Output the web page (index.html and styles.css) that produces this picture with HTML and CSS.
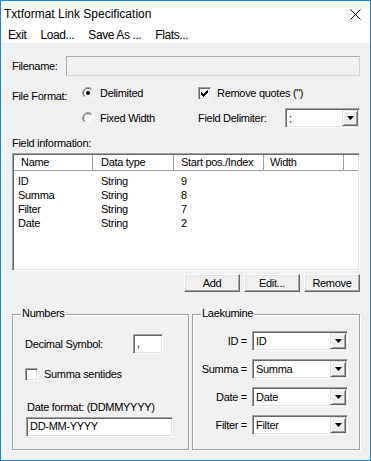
FILE: index.html
```html
<!DOCTYPE html>
<html>
<head>
<meta charset="utf-8">
<title>Txtformat Link Specification</title>
<link rel="stylesheet" href="styles.css">
</head>
<body>
<div class="window">
  <div class="titlebar">
    <span class="title">Txtformat Link Specification</span>
    <svg class="close" width="11" height="11" viewBox="0 0 11 11"><path d="M0.5 0.5 L10.5 10.5 M10.5 0.5 L0.5 10.5" stroke="#000" stroke-width="1" fill="none"/></svg>
  </div>
  <div class="menubar">
    <span>Exit</span><span>Load...</span><span>Save As ...</span><span>Flats...</span>
  </div>
  <div class="content">
    <div class="filename-row">
      <span class="lbl">Filename:</span>
      <div class="field-disabled"></div>
    </div>

    <div class="format">
      <div class="ff-label">File Format:</div>
      <div class="opt r1">
        <svg class="radio" width="12" height="12" viewBox="0 0 12 12">
          <circle cx="6" cy="6" r="5" fill="#fff"/>
          <path d="M2.1 9.9 A5.5 5.5 0 0 1 9.9 2.1" stroke="#a0a0a0" fill="none"/>
          <path d="M9.9 2.1 A5.5 5.5 0 0 1 2.1 9.9" stroke="#fff" fill="none"/>
          <path d="M2.8 9.2 A4.5 4.5 0 0 1 9.2 2.8" stroke="#696969" fill="none"/>
          <path d="M9.2 2.8 A4.5 4.5 0 0 1 2.8 9.2" stroke="#e3e3e3" fill="none"/>
          <circle cx="6" cy="6" r="2" fill="#000"/>
        </svg>
        <span>Delimited</span>
      </div>
      <div class="opt c1">
        <span class="cb">
          <svg width="11" height="11" viewBox="0 0 11 11" fill="#000">
            <rect x="2" y="4" width="1" height="3"/><rect x="3" y="5" width="1" height="3"/><rect x="4" y="6" width="1" height="3"/><rect x="5" y="5" width="1" height="3"/><rect x="6" y="4" width="1" height="3"/><rect x="7" y="3" width="1" height="3"/><rect x="8" y="2" width="1" height="3"/>
          </svg>
        </span>
        <span>Remove quotes (")</span>
      </div>
      <div class="opt r2">
        <svg class="radio" width="12" height="12" viewBox="0 0 12 12">
          <circle cx="6" cy="6" r="5" fill="#fff"/>
          <path d="M2.1 9.9 A5.5 5.5 0 0 1 9.9 2.1" stroke="#a0a0a0" fill="none"/>
          <path d="M9.9 2.1 A5.5 5.5 0 0 1 2.1 9.9" stroke="#fff" fill="none"/>
          <path d="M2.8 9.2 A4.5 4.5 0 0 1 9.2 2.8" stroke="#696969" fill="none"/>
          <path d="M9.2 2.8 A4.5 4.5 0 0 1 2.8 9.2" stroke="#e3e3e3" fill="none"/>
        </svg>
        <span>Fixed Width</span>
      </div>
      <div class="delim">
        <span>Field Delimiter:</span>
        <div class="combo w75"><span class="val">;</span><span class="arrow"><svg width="7" height="4" viewBox="0 0 7 4"><polygon points="0,0 7,0 3.5,4" fill="#000"/></svg></span></div>
      </div>
    </div>

    <div class="section-label">Field information:</div>
    <div class="listview">
      <div class="lv-header">
        <div class="hcell">Name</div>
        <div class="hcell">Data type</div>
        <div class="hcell">Start pos./Index</div>
        <div class="hcell">Width</div>
        <div class="hcell filler"></div>
      </div>
      <div class="lv-body">
        <div class="lv-row"><span>ID</span><span>String</span><span>9</span><span></span></div>
        <div class="lv-row"><span>Summa</span><span>String</span><span>8</span><span></span></div>
        <div class="lv-row"><span>Filter</span><span>String</span><span>7</span><span></span></div>
        <div class="lv-row"><span>Date</span><span>String</span><span>2</span><span></span></div>
      </div>
    </div>

    <div class="buttons">
      <div class="btn">Add</div>
      <div class="btn">Edit...</div>
      <div class="btn">Remove</div>
    </div>

    <div class="groups">
      <div class="group numbers">
        <span class="legend">Numbers</span>
        <div class="dec-row">
          <span class="dec-lbl">Decimal Symbol:</span>
          <div class="edit w30">,</div>
        </div>
        <div class="opt cb-row">
          <span class="cb"></span>
          <span>Summa sentides</span>
        </div>
        <div class="date-lbl">Date format: (DDMMYYYY)</div>
        <div class="edit date-edit">DD-MM-YYYY</div>
      </div>
      <div class="group laek">
        <span class="legend">Laekumine</span>
        <div class="map-grid">
          <span class="map-lbl">ID =</span>
          <div class="combo"><span class="val">ID</span><span class="arrow"><svg width="7" height="4" viewBox="0 0 7 4"><polygon points="0,0 7,0 3.5,4" fill="#000"/></svg></span></div>
          <span class="map-lbl">Summa =</span>
          <div class="combo"><span class="val">Summa</span><span class="arrow"><svg width="7" height="4" viewBox="0 0 7 4"><polygon points="0,0 7,0 3.5,4" fill="#000"/></svg></span></div>
          <span class="map-lbl">Date =</span>
          <div class="combo"><span class="val">Date</span><span class="arrow"><svg width="7" height="4" viewBox="0 0 7 4"><polygon points="0,0 7,0 3.5,4" fill="#000"/></svg></span></div>
          <span class="map-lbl">Filter =</span>
          <div class="combo"><span class="val">Filter</span><span class="arrow"><svg width="7" height="4" viewBox="0 0 7 4"><polygon points="0,0 7,0 3.5,4" fill="#000"/></svg></span></div>
        </div>
      </div>
    </div>
  </div>
</div>
</body>
</html>
```

FILE: styles.css
```css
* { box-sizing: border-box; }
html, body { margin: 0; padding: 0; }
body {
  font-family: "Liberation Sans", Arial, sans-serif;
  font-size: 11px;
  letter-spacing: -0.3px;
  color: #000;
  background: #fff;
}
.window {
  width: 371px;
  height: 461px;
  border: 1px solid #1883d7;
  background: #f0f0f0;
  display: flex;
  flex-direction: column;
  overflow: hidden;
}
.titlebar {
  height: 26px;
  flex: none;
  background: #fff;
  display: flex;
  align-items: center;
  justify-content: space-between;
  padding: 0 9px 0 3px;
  font-size: 12px;
  letter-spacing: 0;
}
.close { display: block; }
.menubar {
  height: 16px;
  flex: none;
  background: #fff;
  display: flex;
  align-items: center;
  gap: 14px;
  padding-left: 7px;
  font-size: 12px;
  letter-spacing: -0.4px;
}
.content { padding: 13px 10px 0 11px; line-height: 13px; }

/* shared 3D styles */
.edit, .combo, .listview, .cb {
  border: 1px solid;
  border-color: #a0a0a0 #fff #fff #a0a0a0;
  box-shadow: inset 1px 1px 0 #696969, inset -1px -1px 0 #e3e3e3;
  background: #fff;
}

.filename-row { display: flex; align-items: center; height: 20px; }
.filename-row .lbl { width: 54px; }
.field-disabled {
  flex: 1;
  height: 20px;
  border: 1px solid #acacac;
  border-right-color: #d4d4d4;
  border-bottom-color: #d4d4d4;
  background: #f0f0f0;
}

.format {
  display: grid;
  grid-template-columns: 70px 116px 1fr;
  grid-template-rows: 20px 22px;
  row-gap: 4px;
  margin-top: 7px;
}
.ff-label { grid-row: 1; grid-column: 1; padding-top: 7px; }
.opt { display: flex; align-items: center; gap: 6px; }
.r1 { grid-row: 1; grid-column: 2; }
.c1 { grid-row: 1; grid-column: 3; }
.r2 { grid-row: 2; grid-column: 2; }
.radio { display: block; flex: none; }
.cb {
  width: 13px;
  height: 13px;
  flex: none;
  display: flex;
  align-items: center;
  justify-content: center;
}
.cb svg { display: block; }
.delim {
  grid-row: 2;
  grid-column: 3;
  display: flex;
  align-items: center;
  justify-content: space-between;
}

.combo {
  height: 20px;
  padding: 1px;
  display: flex;
  align-items: center;
}
.w75 { width: 75px; }
.combo .val { flex: 1; padding-left: 2px; white-space: nowrap; overflow: hidden; }
.arrow {
  width: 16px;
  height: 16px;
  flex: none;
  border: 1px solid;
  border-color: #e3e3e3 #696969 #696969 #e3e3e3;
  box-shadow: inset 1px 1px 0 #fff, inset -1px -1px 0 #a0a0a0;
  background: #f0f0f0;
  display: flex;
  align-items: center;
  justify-content: center;
}
.arrow svg { display: block; }

.section-label { margin-top: 8px; }
.listview {
  margin-top: 3px;
  height: 118px;
  padding: 1px;
}
.lv-header, .lv-row {
  display: grid;
  grid-template-columns: 79px 81px 90px 80px 1fr;
}
.hcell {
  height: 16px;
  line-height: 15px;
  padding-left: 7px;
  border-right: 1px solid #a0a0a0;
  border-bottom: 1px solid #a0a0a0;
  box-shadow: inset 1px 1px 0 #fff;
  background: #fff;
  white-space: nowrap;
  overflow: hidden;
}
.hcell:nth-child(2) { padding-left: 8px; }
.hcell:nth-child(4) { padding-left: 6px; }
.hcell.filler { border-right: none; }
.lv-body { padding-top: 3px; }
.lv-row { line-height: 14px; }
.lv-row span:nth-child(1) { padding-left: 4px; }
.lv-row span:nth-child(2) { padding-left: 8px; }
.lv-row span:nth-child(3) { padding-left: 7px; }

.buttons {
  display: flex;
  justify-content: flex-end;
  gap: 4px;
  margin-top: 3px;
}
.btn {
  width: 56px;
  height: 18px;
  border: 1px solid;
  border-color: #fff #696969 #696969 #fff;
  box-shadow: inset -1px -1px 0 #a0a0a0, inset 1px 1px 0 #e3e3e3;
  background: #f0f0f0;
  text-align: center;
  line-height: 16px;
}

.groups {
  display: flex;
  gap: 3px;
  margin-top: 22px;
}
.group {
  position: relative;
  height: 136px;
  border: 1px solid #a0a0a0;
  box-shadow: inset 1px 1px 0 #fff, 1px 1px 0 #fff;
}
.legend {
  position: absolute;
  top: -8px;
  left: 8px;
  padding: 0 1px;
  background: #f0f0f0;
  line-height: 13px;
}
.numbers { width: 177px; padding: 19px 0 0 12px; }
.dec-row { display: flex; align-items: center; height: 20px; }
.dec-lbl { width: 108px; }
.edit { height: 20px; padding-left: 3px; line-height: 17px; }
.w30 { width: 30px; }
.cb-row { margin-top: 14px; }
.date-lbl { margin-top: 20px; margin-left: 2px; }
.date-edit { margin-top: 3px; margin-left: 1px; width: 147px; }

.laek { width: 168px; padding: 16px 11px 0 0; }
.map-grid {
  display: grid;
  grid-template-columns: 1fr 96px;
  grid-auto-rows: 20px;
  column-gap: 5px;
  row-gap: 8px;
  align-items: center;
}
.map-lbl { text-align: right; }
```
